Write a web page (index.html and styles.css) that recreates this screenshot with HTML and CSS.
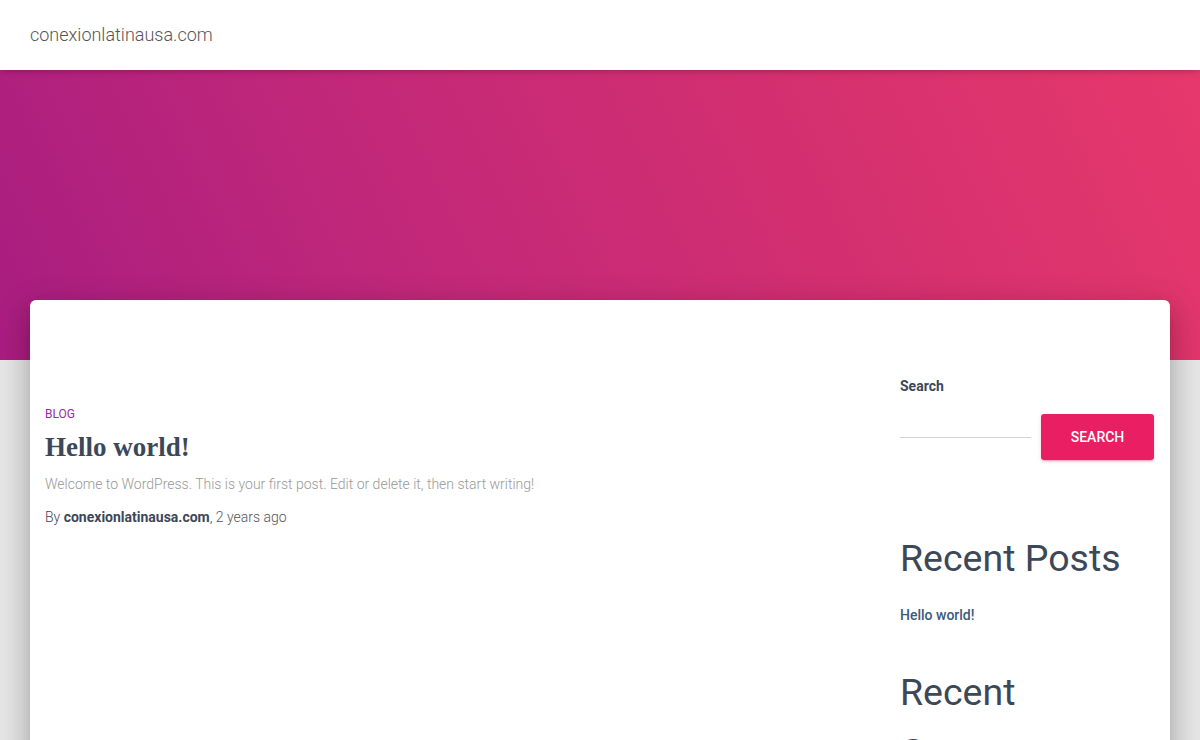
FILE: index.html
```html
<!DOCTYPE html>
<html lang="en">
<head>
<meta charset="utf-8">
<title>conexionlatinausa.com</title>
<link rel="stylesheet" href="styles.css">
</head>
<body>
<header class="site-header">
  <a class="brand" href="#">conexionlatinausa.com</a>
</header>
<div class="hero"></div>
<main class="main">
  <div class="card">
    <section class="posts">
      <article class="post">
        <a class="category" href="#">BLOG</a>
        <h2 class="post-title">Hello world!</h2>
        <p class="excerpt">Welcome to WordPress. This is your first post. Edit or delete it, then start writing!</p>
        <p class="meta">By <b>conexionlatinausa.com</b>, <span class="ago">2 years ago</span></p>
      </article>
    </section>
    <aside class="sidebar">
      <div class="widget-search">
        <label class="search-label">Search</label>
        <div class="search-row">
          <input class="search-input" type="text">
          <button class="search-btn">SEARCH</button>
        </div>
      </div>
      <h2 class="widget-title recent-posts">Recent Posts</h2>
      <a class="recent-link" href="#">Hello world!</a>
      <h2 class="widget-title recent-comments">Recent Comments</h2>
    </aside>
  </div>
</main>
</body>
</html>
```
FILE: styles.css
```css
html, body {
  margin: 0;
  padding: 0;
}
body {
  background: #e5e5e5;
  font-family: Roboto, "Liberation Sans", sans-serif;
  color: #3c4858;
  overflow: hidden;
  height: 740px;
}
.site-header {
  position: relative;
  z-index: 2;
  height: 70px;
  box-sizing: border-box;
  background: #fff;
  display: flex;
  align-items: center;
  padding: 0 0 2px 30px;
  box-shadow: 0 1px 10px -4px rgba(0,0,0,0.35), 0 2px 4px rgba(0,0,0,0.08);
}
.brand {
  font-size: 18px;
  font-weight: 300;
  color: #555;
  text-decoration: none;
}
.hero {
  height: 290px;
  background: linear-gradient(65deg, #a81d80 0%, #c22879 35%, #d5306f 70%, #e6386c 100%);
}
.main {
  margin-top: -60px;
  padding: 0 30px;
  position: relative;
  z-index: 1;
}
.card {
  background: #fff;
  border-radius: 6px;
  height: 600px;
  display: flex;
  box-shadow: 0 16px 24px 2px rgba(0,0,0,0.14), 0 6px 30px 5px rgba(0,0,0,0.12), 0 8px 10px -5px rgba(0,0,0,0.2);
}
.posts {
  width: 730px;
  padding: 106px 15px 0;
}
.category {
  display: block;
  font-size: 12px;
  line-height: 16px;
  color: #9c27b0;
  text-decoration: none;
  font-weight: 400;
}
.post-title {
  margin: 8px 0 0;
  font-family: "Liberation Serif", "DejaVu Serif", serif;
  font-weight: 700;
  font-size: 27px;
  line-height: 34px;
  color: #3c4858;
}
.excerpt {
  margin: 10px 0 0;
  font-size: 14px;
  line-height: 20px;
  font-weight: 300;
  color: #999;
}
.meta {
  margin: 13px 0 0;
  font-size: 14px;
  line-height: 20px;
  color: #3c4858;
  font-weight: 300;
}
.meta b {
  font-weight: 700;
}
.ago {
  font-weight: 300;
  color: #555;
}
.sidebar {
  margin-left: 110px;
  width: 255px;
  padding-top: 76px;
}
.search-label {
  display: block;
  font-size: 14px;
  line-height: 20px;
  font-weight: 700;
  color: #3c4858;
}
.search-row {
  display: flex;
  align-items: flex-start;
  margin-top: 18px;
  gap: 10px;
}
.search-input {
  width: 131px;
  height: 24px;
  border: 0;
  border-bottom: 1px solid #d2d2d2;
  padding: 0;
  margin: 0;
  outline: none;
  background: transparent;
  box-sizing: border-box;
}
.search-btn {
  width: 113px;
  height: 46px;
  border: 0;
  border-radius: 3px;
  background: #e91e63;
  color: #fff;
  font-family: Roboto, "Liberation Sans", sans-serif;
  font-size: 14px;
  font-weight: 500;
  padding: 0;
  box-shadow: 0 2px 2px 0 rgba(233,30,99,0.14), 0 3px 1px -2px rgba(233,30,99,0.2), 0 1px 5px 0 rgba(233,30,99,0.12);
}
.widget-title {
  margin: 0;
  font-size: 37.5px;
  line-height: 60px;
  font-weight: 400;
  color: #3c4858;
}
.recent-posts {
  margin-top: 68px;
}
.recent-link {
  display: block;
  margin-top: 17px;
  font-size: 14px;
  line-height: 20px;
  font-weight: 500;
  color: #3a5a7c;
  text-decoration: none;
}
.recent-comments {
  margin-top: 37px;
}
```
